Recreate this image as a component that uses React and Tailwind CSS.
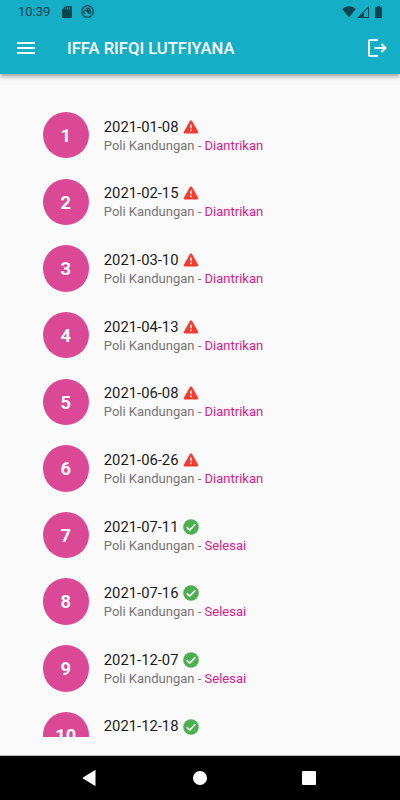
const queues = [
  { date: "2021-01-08", status: "Diantrikan" },
  { date: "2021-02-15", status: "Diantrikan" },
  { date: "2021-03-10", status: "Diantrikan" },
  { date: "2021-04-13", status: "Diantrikan" },
  { date: "2021-06-08", status: "Diantrikan" },
  { date: "2021-06-26", status: "Diantrikan" },
  { date: "2021-07-11", status: "Selesai" },
  { date: "2021-07-16", status: "Selesai" },
  { date: "2021-12-07", status: "Selesai" },
  { date: "2021-12-18", status: "Selesai" },
];

const StatusBar = () => (
  <div className="flex h-[23px] items-center pl-[18px] pr-[18px] text-[#0b444e]">
    <span className="w-[33px] text-[13px] leading-[23px] whitespace-nowrap">10:39</span>
    <svg className="ml-[11px] h-3 w-[10px]" viewBox="0 0 10 12" fill="currentColor">
      <path d="M3.5 0H9a1 1 0 0 1 1 1v10a1 1 0 0 1-1 1H1a1 1 0 0 1-1-1V3.5z" />
      <path d="M3.8 1.3v2.2M5.8 1.3v2.2M7.8 1.3v2.2" stroke="#15aec7" strokeWidth="0.9" />
    </svg>
    <svg className="ml-[9px] h-[13px] w-[13px]" viewBox="0 0 13 13" fill="none" stroke="currentColor">
      <circle cx="6.5" cy="6.5" r="5.8" strokeWidth="1.3" />
      <path d="M4 8.9A3.5 3.5 0 0 1 4 4.100M5.200 3.400A3.500 3.500 0 0 1 9.600 8" strokeWidth="1.1" />
      <path d="M4.500 4.800l4.800 4.400M5.800 4.900a1.800 1.800 0 0 1 2.200 2.200" strokeWidth="1.4" />
    </svg>
    <div className="ml-auto flex items-center">
      <svg className="h-3 w-[14px]" viewBox="0 0 14 12" fill="currentColor">
        <path d="M7 11.6L.2 3.1C2.1 1.2 4.4.2 7 .2s4.9 1 6.8 2.9z" />
      </svg>
      <svg className="ml-[1px] h-3 w-3" viewBox="0 0 12 12" fill="currentColor">
        <path fillRule="evenodd" d="M0 12L12 0v12zM7 6.500V11H11V2.5z" />
      </svg>
      <svg className="ml-[6px] h-3 w-[7px]" viewBox="0 0 7 12" fill="currentColor">
        <path d="M2 0h3v1.2h1.3a.7.7 0 0 1 .7.7v9.4a.7.7 0 0 1-.7.7H.7a.7.7 0 0 1-.7-.7V1.9a.7.7 0 0 1 .7-.7H2z" />
      </svg>
    </div>
  </div>
);

const AppBar = () => (
  <header className="z-10 h-[74px] shrink-0 bg-[#15aec7] shadow-[0_2px_5px_rgba(0,0,0,0.42)]">
    <StatusBar />
    <div className="flex h-[50px] items-center pl-[17px] pr-[13px] text-white">
      <svg className="h-3 w-[18px]" viewBox="0 0 18 12" fill="currentColor">
        <path d="M0 0h18v2H0zM0 5h18v2H0zM0 10h18v2H0z" />
      </svg>
      <h1 className="ml-8 pt-[2px] text-[16.6px] font-medium whitespace-nowrap">IFFA RIFQI LUTFIYANA</h1>
      <svg className="ml-auto h-[18px] w-[19px]" viewBox="0 0 19 18" fill="none" stroke="currentColor" strokeWidth="2">
        <path d="M10 1H2a1 1 0 0 0-1 1v14a1 1 0 0 0 1 1h8" />
        <path d="M6.500 9h11.500M13.500 5L17.500 9l-4 4" />
      </svg>
    </div>
  </header>
);

const StatusIcon = ({ status }) =>
  status === "Selesai" ? (
    <svg className="h-4 w-4" viewBox="0 0 16 16">
      <circle cx="8" cy="8" r="7.8" fill="#4caf50" />
      <path d="M3.8 8.2l2.9 2.9 5.7-5.8" fill="none" stroke="white" strokeWidth="1.6" />
    </svg>
  ) : (
    <svg className="h-4 w-4" viewBox="0 0 16 16">
      <path d="M8 2.400L14.200 13.400H1.800z" fill="#f93b2f" stroke="#f93b2f" strokeWidth="2.200" strokeLinejoin="round" />
      <path d="M8 5.600v3.600M8 10.600v1.600" stroke="white" strokeWidth="1.4" />
    </svg>
  );

const QueueItem = ({ number, date, status }) => (
  <li className="flex h-[66.65px] items-start">
    <div className="flex h-[46.4px] w-[46.4px] shrink-0 items-center justify-center rounded-full bg-[#db4896] pt-px text-[18.3px] font-bold text-white">
      {number}
    </div>
    <div className="ml-[14.8px] pt-[4.8px]">
      <div className="flex h-5 items-center gap-[4.500px]">
        <span className="text-[14.8px] text-[#1c1c1c]">{date}</span>
        <StatusIcon status={status} />
      </div>
      <p className="text-[13px] leading-[18px] whitespace-nowrap text-[#757575]">
        Poli Kandungan - <span className="text-[#d81b8c]">{status}</span>
      </p>
    </div>
  </li>
);

const NavigationBar = () => (
  <nav className="flex h-[45px] shrink-0 items-center border-t border-[#b5b8b8] bg-black pl-[82px] text-white">
    <svg className="h-4 w-[14px]" viewBox="0 0 14 16" fill="currentColor">
      <path d="M13.5.6v14.8a.5.5 0 0 1-.7.4L1 8.500a.6.6 0 0 1 0-1L12.800.2a.5.5 0 0 1 .7.4z" />
    </svg>
    <div className="ml-[97px] h-[14px] w-[14px] rounded-full bg-white" />
    <div className="ml-[95px] h-[14px] w-[14px] rounded-[1px] bg-white" />
  </nav>
);

const App = () => {
  return (
    <div className="flex h-[800px] w-[400px] flex-col overflow-hidden bg-[#fafafa] font-[Roboto,sans-serif]">
      <AppBar />
      <main className="min-h-0 flex-1 pt-[38px] pb-[18px] pl-[42.6px]">
        <ul className="h-full overflow-hidden">
          {queues.map((item, index) => (
            <QueueItem key={item.date} number={index + 1} {...item} />
          ))}
        </ul>
      </main>
      <NavigationBar />
    </div>
  );
};

export default App;
